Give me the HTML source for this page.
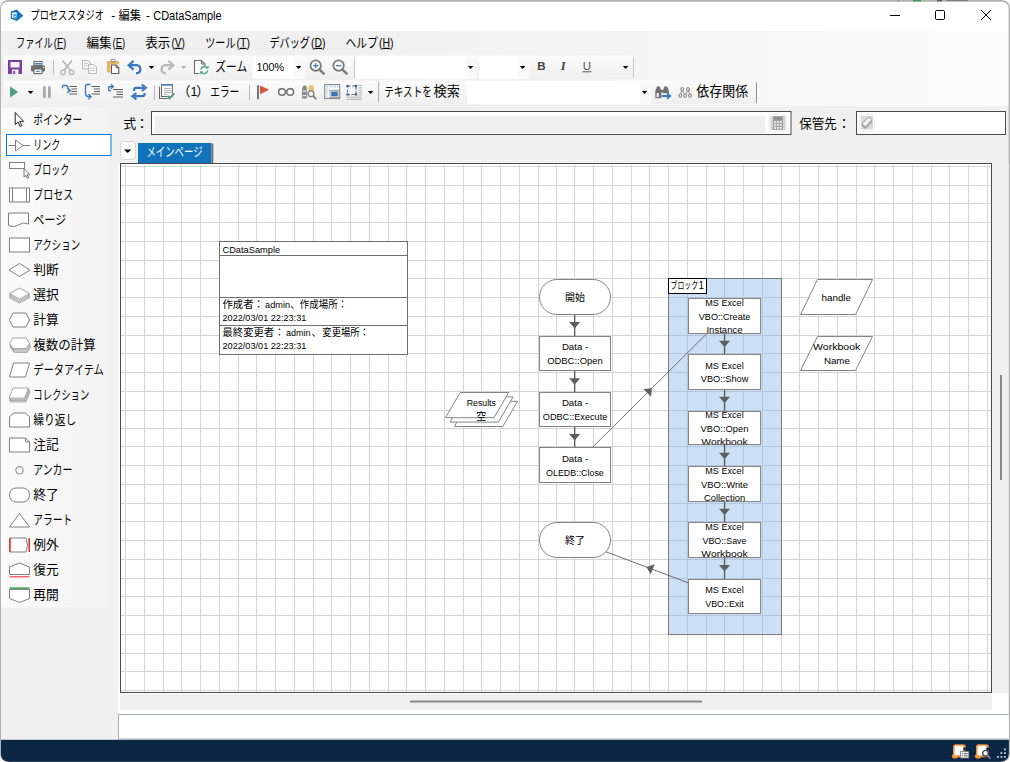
<!DOCTYPE html><html lang="ja"><head><meta charset="utf-8"><title>プロセススタジオ</title><style>html,body{margin:0;padding:0;background:#fff;overflow:hidden}svg{display:block}text{font-family:'Liberation Sans','Noto Sans CJK JP',sans-serif;white-space:pre}</style></head><body>
<svg width="1010" height="762" viewBox="0 0 1010 762">
<defs>
<linearGradient id="gmenu" x1="0" x2="1" y1="0" y2="0"><stop offset="0" stop-color="#f0f0f0"/><stop offset="0.35" stop-color="#f0f0f0"/><stop offset="1" stop-color="#fcfcfc"/></linearGradient>
<linearGradient id="gleft" x1="0" x2="1" y1="0" y2="0"><stop offset="0" stop-color="#fbfbfb"/><stop offset="0.85" stop-color="#f3f3f3"/><stop offset="1" stop-color="#f0f0f0"/></linearGradient>
<linearGradient id="gtool" x1="0" x2="0" y1="0" y2="1"><stop offset="0" stop-color="#fbfbfb"/><stop offset="1" stop-color="#efefef"/></linearGradient>
<clipPath id="win"><path d="M1,9 Q1,1.7 9,1.7 L1001,1.7 Q1008.6,1.7 1008.6,9 L1008.6,753 Q1008.6,761.5 1000,761.5 L9,761.5 Q1,761.5 1,753 Z"/></clipPath>
<clipPath id="canvas"><rect x="121" y="165" width="871" height="527"/></clipPath>
</defs>
<rect x="0" y="0" width="1010" height="762" fill="#ffffff" />
<path d="M0,9 Q0,0 9,0 L1001,0 Q1010,0 1010,9 L1010,753 Q1010,762 1001,762 L9,762 Q0,762 0,753 Z" fill="#b2b2b2" />
<rect x="913" y="0" width="8" height="1.6" fill="#3f9a62" />
<rect x="897.5" y="0" width="1" height="1.6" fill="#777" />
<rect x="937" y="0" width="5" height="1.5" fill="#5a5a5a" />
<rect x="946" y="0" width="22" height="1.1" fill="#7c7c7c" />
<g clip-path="url(#win)">
<rect x="0" y="0" width="1010" height="31" fill="#ffffff" />
<rect x="0" y="31" width="1010" height="75" fill="url(#gmenu)" />
<rect x="0" y="106" width="1010" height="634" fill="#f0f0f0" />
<rect x="0" y="740" width="1010" height="22" fill="#0b2745" />
<path d="M10.8,11.6 L16.8,9.4 L23.3,15.8 L17,21 L10.8,18.8 Z" fill="#1177bb" />
<rect x="12.1" y="12.6" width="4.8" height="5.6" fill="#ffffff" rx="1" />
<text x="13.0" y="17.5" font-size="5.5" fill="#1177bb" font-weight="bold">B</text>
<text x="30.5" y="20.0" font-size="12" fill="#000" textLength="73.4" lengthAdjust="spacingAndGlyphs" >プロセススタジオ</text>
<text x="111.3" y="20.0" font-size="12" fill="#000" >-</text>
<text x="118.5" y="20.0" font-size="12" fill="#000" textLength="22.6" lengthAdjust="spacingAndGlyphs" >編集</text>
<text x="146.0" y="20.0" font-size="12" fill="#000" >-</text>
<text x="153.3" y="20.0" font-size="12" fill="#000" textLength="68.2" lengthAdjust="spacingAndGlyphs" >CDataSample</text>
<line x1="890" y1="15.5" x2="900" y2="15.5" stroke="#000" stroke-width="1" />
<rect x="935.5" y="10.5" width="9" height="9" fill="none" stroke="#000" stroke-width="1" rx="1" />
<path d="M981,10 L991,20 M991,10 L981,20" fill="none" stroke="#000" stroke-width="1" />
<text x="16.0" y="46.8" font-size="13" fill="#000" textLength="36.8" lengthAdjust="spacingAndGlyphs" >ファイル</text>
<text x="53.8" y="46.8" font-size="12.5" textLength="12.4" lengthAdjust="spacingAndGlyphs">(<tspan text-decoration="underline">F</tspan>)</text>
<text x="86.4" y="46.8" font-size="13" fill="#000" textLength="25.2" lengthAdjust="spacingAndGlyphs" >編集</text>
<text x="112.6" y="46.8" font-size="12.5" textLength="12.6" lengthAdjust="spacingAndGlyphs">(<tspan text-decoration="underline">E</tspan>)</text>
<text x="145.3" y="46.8" font-size="13" fill="#000" textLength="25.1" lengthAdjust="spacingAndGlyphs" >表示</text>
<text x="171.4" y="46.8" font-size="12.5" textLength="13.6" lengthAdjust="spacingAndGlyphs">(<tspan text-decoration="underline">V</tspan>)</text>
<text x="205.2" y="46.8" font-size="13" fill="#000" textLength="30.3" lengthAdjust="spacingAndGlyphs" >ツール</text>
<text x="236.5" y="46.8" font-size="12.5" textLength="13.5" lengthAdjust="spacingAndGlyphs">(<tspan text-decoration="underline">T</tspan>)</text>
<text x="269.5" y="46.8" font-size="13" fill="#000" textLength="40.5" lengthAdjust="spacingAndGlyphs" >デバッグ</text>
<text x="311.0" y="46.8" font-size="12.5" textLength="14.5" lengthAdjust="spacingAndGlyphs">(<tspan text-decoration="underline">D</tspan>)</text>
<text x="345.5" y="46.8" font-size="13" fill="#000" textLength="32.5" lengthAdjust="spacingAndGlyphs" >ヘルプ</text>
<text x="379.0" y="46.8" font-size="12.5" textLength="14.5" lengthAdjust="spacingAndGlyphs">(<tspan text-decoration="underline">H</tspan>)</text>
<path d="M4,55.5 L633,55.5 L633,77.5 Q633,79.5 631,79.5 L4,79.5 Z" fill="url(#gtool)" />
<path d="M4,80.5 L378,80.5 L378,102 Q378,104 376,104 L4,104 Z" fill="url(#gtool)" />
<path d="M380,80.5 L756,80.5 L756,102 Q756,104 754,104 L380,104 Z" fill="url(#gtool)" />
<line x1="633.5" y1="57" x2="633.5" y2="78" stroke="#c4c4c4" stroke-width="1" />
<line x1="378.5" y1="82" x2="378.5" y2="102.5" stroke="#b0b0b0" stroke-width="1" />
<line x1="756.5" y1="82.5" x2="756.5" y2="103" stroke="#8c8c8c" stroke-width="1" />
<path d="M8,60 h14 v14 h-14 Z M10.5,62 v5.5 h9 v-5.5 Z M12,69.5 v4.5 h6.5 v-4.5 Z" fill="#7e3fa3" fill-rule="evenodd"/>
<rect x="13.3" y="71" width="1.8" height="3" fill="#7e3fa3" />
<rect x="34" y="61.5" width="8" height="4" fill="#ffffff" stroke="#6e6e6e" stroke-width="1.2" />
<rect x="31" y="65.5" width="14" height="6" fill="#6e6e6e" rx="1" />
<rect x="34" y="69" width="8" height="4.6" fill="#ffffff" stroke="#6e6e6e" stroke-width="1.2" />
<rect x="35" y="63" width="6" height="1.5" fill="#3f7fc0" />
<rect x="36.3" y="70.8" width="3.4" height="1.2" fill="#3f7fc0" />
<rect x="43" y="67" width="1.2" height="1.2" fill="#ffffff" />
<line x1="53.5" y1="60" x2="53.5" y2="75" stroke="#bdbdbd" stroke-width="1" />
<path d="M62.5,60.5 L71,71 M72,60.5 L63.5,71" fill="none" stroke="#b4b4b4" stroke-width="1.6" />
<circle cx="63" cy="72.3" r="2.2" fill="none" stroke="#b4b4b4" stroke-width="1.3"/><circle cx="71.5" cy="72.3" r="2.2" fill="none" stroke="#b4b4b4" stroke-width="1.3"/>
<path d="M82.5,60.5 h5.5 l2.5,2.5 v6 h-8 Z" fill="#f4f4f4" stroke="#b8b8b8" stroke-width="1" />
<path d="M88.5,64.5 h5.5 l2.5,2.5 v6.5 h-8 Z" fill="#f4f4f4" stroke="#b8b8b8" stroke-width="1" />
<path d="M84,63.5 h4 M84,65.5 h3 M90,68.5 h5 M90,70.5 h5" fill="none" stroke="#c4c4c4" stroke-width="0.8" />
<path d="M107,61 h12 v3.5 h-8.5 v8 h-3.5 Z" fill="#e9b65f" />
<rect x="110.8" y="59.3" width="4.6" height="2.6" fill="none" stroke="#8a8a8a" stroke-width="1" rx="1" />
<path d="M111.5,65 h4.5 l2.8,2.8 v5.7 h-7.3 Z" fill="#ffffff" stroke="#5a5a5a" stroke-width="1.1" />
<path d="M116,65 v2.8 h2.8" fill="none" stroke="#5a5a5a" stroke-width="0.9" />
<path d="M130,65.2 H137.5 A4.2,4.2 0 0 1 137.5,73.2 H136" fill="none" stroke="#3b79bf" stroke-width="2.2" />
<path d="M133.6,60.8 L128.6,65.2 L133.6,69.6" fill="none" stroke="#3b79bf" stroke-width="2.2" />
<path d="M148.7,66 h5.6 l-2.8,3 Z" fill="#000" />
<path d="M172,65.2 H164.5 A4.2,4.2 0 0 0 164.5,73.2 H166" fill="none" stroke="#b9b9b9" stroke-width="2.2" />
<path d="M168.4,60.8 L173.4,65.2 L168.4,69.6" fill="none" stroke="#b9b9b9" stroke-width="2.2" />
<path d="M180.8,66 h5.6 l-2.8,3 Z" fill="#b0b0b0" />
<path d="M194.5,60.5 h7 l3.5,3.5 v9.5 h-10.5 Z" fill="#fbfbfb" stroke="#6b6b6b" stroke-width="1.1" />
<path d="M201.5,60.5 v3.5 h3.5" fill="none" stroke="#6b6b6b" stroke-width="1" />
<rect x="199.5" y="66" width="9.5" height="9" fill="#f6f6f6" />
<path d="M201,69.5 a3.6,3.6 0 0 1 6.4,-1.6 M207.6,70.5 a3.6,3.6 0 0 1 -6.4,1.8" fill="none" stroke="#5aa585" stroke-width="1.6" />
<path d="M208.6,65.6 v3.2 h-3.2 Z M200,74.4 v-3.2 h3.2 Z" fill="#5aa585" />
<text x="215.3" y="70.9" font-size="13" fill="#000" textLength="32.0" lengthAdjust="spacingAndGlyphs" >ズーム</text>
<rect x="253" y="56.5" width="51.6" height="22.2" fill="#ffffff" />
<rect x="293" y="57.5" width="11" height="20.2" fill="#f9f9f9" />
<text x="256.6" y="70.5" font-size="11.5" fill="#000" textLength="27.5" lengthAdjust="spacingAndGlyphs" >100%</text>
<path d="M295.8,66 h5.6 l-2.8,3 Z" fill="#000" />
<circle cx="315.7" cy="65.6" r="5.2" fill="#fbfbfb" stroke="#7d7d7d" stroke-width="1.9"/>
<line x1="319.9" y1="69.8" x2="323.7" y2="73.6" stroke="#7d7d7d" stroke-width="2.6" stroke-linecap="round"/>
<line x1="313.09999999999997" y1="65.6" x2="318.3" y2="65.6" stroke="#3b79bf" stroke-width="1.3" />
<line x1="315.7" y1="63" x2="315.7" y2="68.2" stroke="#3b79bf" stroke-width="1.3" />
<circle cx="338.6" cy="65.6" r="5.2" fill="#fbfbfb" stroke="#7d7d7d" stroke-width="1.9"/>
<line x1="342.8" y1="69.8" x2="346.6" y2="73.6" stroke="#7d7d7d" stroke-width="2.6" stroke-linecap="round"/>
<line x1="336.0" y1="65.6" x2="341.20000000000005" y2="65.6" stroke="#3b79bf" stroke-width="1.3" />
<line x1="354.5" y1="57" x2="354.5" y2="78" stroke="#c8c8c8" stroke-width="1" />
<rect x="355.5" y="56.5" width="121.5" height="22.2" fill="#ffffff" />
<rect x="465" y="57.5" width="12" height="20.2" fill="#f9f9f9" />
<path d="M467.8,66 h5.6 l-2.8,3 Z" fill="#000" />
<rect x="479" y="56.5" width="50.2" height="22.2" fill="#ffffff" />
<rect x="517.5" y="57.5" width="11.7" height="20.2" fill="#f9f9f9" />
<path d="M519.8,66 h5.6 l-2.8,3 Z" fill="#000" />
<text x="537.2" y="69.7" font-size="11.5" fill="#444" font-weight="bold">B</text>
<text x="560.8" y="70.3" font-size="12.5" fill="#444" style="font-family:'Liberation Serif',serif;font-weight:bold;font-style:italic">I</text>
<text x="582.8" y="70.0" font-size="11.5" fill="#555" >U</text>
<line x1="582.5" y1="71.8" x2="591.3" y2="71.8" stroke="#555" stroke-width="1" />
<path d="M622.8,66 h5.6 l-2.8,3 Z" fill="#000" />
<path d="M10,86.3 L18.2,92 L10,97.8 Z" fill="#54a082" />
<path d="M27.8,91 h5.6 l-2.8,3 Z" fill="#000" />
<rect x="43" y="86.3" width="2.8" height="11.5" fill="#a9a9a9" />
<rect x="48" y="86.3" width="2.8" height="11.5" fill="#a9a9a9" />
<path d="M62.5,85.5 h3 q2.5,0 2.5,2.5 t2,2.5" fill="none" stroke="#3b79bf" stroke-width="1.3" />
<path d="M62.5,85.2 v3" fill="none" stroke="#3b79bf" stroke-width="1.3" />
<path d="M67.5,88.2 l3,2.4 l-3.2,2" fill="none" stroke="#3b79bf" stroke-width="1.3" />
<path d="M69.5,86.5 h7.5 M71.5,89 h5.5 M71.5,91.5 h5.5 M69.5,94 h7.5" fill="none" stroke="#5e5e5e" stroke-width="1.15" />
<path d="M90.5,84.5 h-3 q-2,0 -2,2 v7 q0,3 3,3 h2" fill="none" stroke="#3b79bf" stroke-width="1.3" />
<path d="M88.2,94 l3,2.6 l-3,2.6" fill="none" stroke="#3b79bf" stroke-width="1.3" />
<path d="M91.5,86.5 h8.5 M94,89 h6 M94,91.5 h6 M91.5,94 h8.5" fill="none" stroke="#5e5e5e" stroke-width="1.15" />
<path d="M113,86.5 h-2.5 q-2,0 -2,2.2 t2.5,2.3" fill="none" stroke="#3b79bf" stroke-width="1.3" />
<path d="M110.8,84.2 l2.6,2.3 l-2.6,2.3" fill="none" stroke="#3b79bf" stroke-width="1.3" />
<path d="M113,89.5 h10 M116.5,92 h6.5 M116.5,94.5 h6.5 M113,97 h10" fill="none" stroke="#5e5e5e" stroke-width="1.15" />
<path d="M134,91 v-1 q0,-2.2 2.2,-2.2 h8" fill="none" stroke="#3b79bf" stroke-width="2.2" />
<path d="M141.8,84.6 L146,87.8 L141.8,91" fill="none" stroke="#3b79bf" stroke-width="2" />
<path d="M144.5,93 v1 q0,2.2 -2.2,2.2 h-8" fill="none" stroke="#3b79bf" stroke-width="2.2" />
<path d="M136.5,93 L132.3,96.2 L136.5,99.4" fill="none" stroke="#3b79bf" stroke-width="2" />
<line x1="154.5" y1="85" x2="154.5" y2="100" stroke="#bdbdbd" stroke-width="1" />
<path d="M159.5,86.5 v12 h10" fill="none" stroke="#666" stroke-width="1.1" />
<rect x="161.5" y="84.5" width="10.8" height="12" fill="#fbfbfb" stroke="#666" stroke-width="1" />
<rect x="161.5" y="84" width="10.8" height="1.6" fill="#3b79bf" />
<path d="M163.5,88.5 h7 M163.5,90.5 h7 M163.5,92.5 h7 M163.5,94.5 h3.5" fill="none" stroke="#b5b5b5" stroke-width="1" shape-rendering="crispEdges"/>
<path d="M167.5,95.8 l2.3,2.4 l4.6,-4.8" fill="none" stroke="#5aa585" stroke-width="2" />
<text y="95.6" font-size="13"><tspan x="177.5">（</tspan><tspan x="190.6" font-size="12.5">1</tspan><tspan x="196.2">）</tspan></text>
<text x="210.3" y="95.5" font-size="13" fill="#000" textLength="29.0" lengthAdjust="spacingAndGlyphs" >エラー</text>
<line x1="249.5" y1="85" x2="249.5" y2="100" stroke="#bdbdbd" stroke-width="1" />
<line x1="258" y1="85.2" x2="258" y2="99.2" stroke="#6a6a6a" stroke-width="1.8" />
<path d="M260,85.5 L269.2,89.8 L260,94.2 Z" fill="#d8583a" />
<ellipse cx="282" cy="92" rx="3.4" ry="3.2" fill="none" stroke="#747474" stroke-width="1.5"/><ellipse cx="290.2" cy="92" rx="3.4" ry="3.2" fill="none" stroke="#747474" stroke-width="1.5"/>
<path d="M285.4,91.5 q0.7,-0.8 1.4,0 M279,90.2 q0.5,-2 2.8,-2 M293.2,90.2 q-0.5,-2 -2.8,-2" fill="none" stroke="#747474" stroke-width="1.1" />
<path d="M302,88.5 l1.5,-3 h2.5 l1,3 v10 h-5 Z" fill="#8a8a8a" />
<path d="M308.5,87 l1,-2 h3 l1.5,3 v4 h-5.5 Z" fill="#ecc27a" />
<rect x="302.8" y="90.5" width="3.4" height="1.2" fill="#f2f2f2" />
<rect x="302.8" y="95" width="3.4" height="1.2" fill="#f2f2f2" />
<circle cx="311" cy="93.8" r="2.9" fill="#f4f4f4" stroke="#7d7d7d" stroke-width="1.3"/>
<line x1="313.2" y1="96" x2="316.3" y2="99.2" stroke="#7d7d7d" stroke-width="1.8" />
<rect x="324.7" y="84.6" width="15" height="14" fill="#fbfbfb" stroke="#7f7f7f" stroke-width="1" />
<path d="M326.5,86.5 h12 M326.5,88.5 v9" fill="none" stroke="#bcd3ec" stroke-width="2" stroke-dasharray="1.6,1"/>
<rect x="330" y="90.3" width="9" height="7.3" fill="#ffffff" stroke="#8c8c8c" stroke-width="0.8" />
<rect x="331.2" y="91.5" width="6.6" height="4.9" fill="#3d75b8" />
<rect x="347.5" y="86" width="8.5" height="8.5" fill="none" stroke="#3b79bf" stroke-width="1.1" stroke-dasharray="3,1.6"/>
<rect x="346.4" y="84.9" width="2.2" height="2.2" fill="#555" />
<rect x="354.9" y="84.9" width="2.2" height="2.2" fill="#555" />
<rect x="346.4" y="93.4" width="2.2" height="2.2" fill="#555" />
<rect x="354.9" y="93.4" width="2.2" height="2.2" fill="#555" />
<path d="M358.5,85.5 h3.5 M358.5,87.8 h3.5 M358.5,90.1 h3.5 M358.5,92.4 h3.5 M358.5,94.7 h3.5" fill="none" stroke="#a8a8a8" stroke-width="0.9" />
<path d="M346.5,97.2 h15.5 M346.5,99.4 h15.5" fill="none" stroke="#a8a8a8" stroke-width="0.9" />
<path d="M367.8,91 h5.6 l-2.8,3 Z" fill="#000" />
<text x="384.3" y="95.6" font-size="13" fill="#000" textLength="47.5" lengthAdjust="spacingAndGlyphs" >テキストを</text>
<text x="433.6" y="95.6" font-size="13.3" fill="#000" textLength="26.3" lengthAdjust="spacingAndGlyphs" >検索</text>
<rect x="467" y="80.8" width="184" height="23" fill="#ffffff" />
<rect x="639.5" y="82" width="11.5" height="20.8" fill="#f9f9f9" />
<path d="M641.8,91 h5.6 l-2.8,3 Z" fill="#000" />
<path d="M655.3,98.2 V91 L657,86.4 H659.6 L661.4,91 V98.2 Z" fill="#6f6f6f" />
<rect x="656.6" y="93" width="2.2" height="4" fill="#f4f4f4" />
<path d="M662.7,93.2 V91 L664.5,86.4 H667.1 L668.9,91 V93.2 Z" fill="#6f6f6f" />
<rect x="661" y="89.8" width="2" height="2.6" fill="#6f6f6f" />
<path d="M661.8,96 H669.5 M667,93.1 L670.3,96 L667,98.9" fill="none" stroke="#3b79bf" stroke-width="1.8" />
<rect x="681.0" y="87.7" width="2.4" height="3.4" fill="#fbfbfb" stroke="#6c6c6c" stroke-width="1" rx="0.8" />
<rect x="686.8" y="87.7" width="2.4" height="3.4" fill="#fbfbfb" stroke="#6c6c6c" stroke-width="1" rx="0.8" />
<rect x="679.0999999999999" y="93.9" width="2.4" height="3.4" fill="#fbfbfb" stroke="#6c6c6c" stroke-width="1" rx="0.8" />
<rect x="683.9" y="93.9" width="2.4" height="3.4" fill="#fbfbfb" stroke="#6c6c6c" stroke-width="1" rx="0.8" />
<rect x="688.6999999999999" y="93.9" width="2.4" height="3.4" fill="#fbfbfb" stroke="#6c6c6c" stroke-width="1" rx="0.8" />
<path d="M681.6,91.2 l-1,2.6 M682.8,91.2 l1.7,2.6 M687.4,91.2 l-1.7,2.6 M688.6,91.2 l1,2.6" fill="none" stroke="#787878" stroke-width="0.8" />
<text x="696.3" y="95.6" font-size="13.2" fill="#000" textLength="52.0" lengthAdjust="spacingAndGlyphs" >依存関係</text>
<rect x="1" y="107.5" width="117" height="500" fill="url(#gleft)" />
<rect x="6.5" y="134.5" width="104.5" height="21" fill="#ffffff" stroke="#0078d7" stroke-width="1" />
<text x="33.3" y="123.8" font-size="13" fill="#000" textLength="49.0" lengthAdjust="spacingAndGlyphs" >ポインター</text>
<text x="33.3" y="148.8" font-size="13" fill="#000" textLength="27.0" lengthAdjust="spacingAndGlyphs" >リンク</text>
<text x="33.3" y="173.8" font-size="13" fill="#000" textLength="36.0" lengthAdjust="spacingAndGlyphs" >ブロック</text>
<text x="33.3" y="198.8" font-size="13" fill="#000" textLength="40.0" lengthAdjust="spacingAndGlyphs" >プロセス</text>
<text x="33.3" y="223.8" font-size="13" fill="#000" textLength="33.0" lengthAdjust="spacingAndGlyphs" >ページ</text>
<text x="33.3" y="248.8" font-size="13" fill="#000" textLength="47.0" lengthAdjust="spacingAndGlyphs" >アクション</text>
<text x="33.3" y="273.8" font-size="13" fill="#000" textLength="25.5" lengthAdjust="spacingAndGlyphs" >判断</text>
<text x="33.3" y="298.8" font-size="13" fill="#000" textLength="25.5" lengthAdjust="spacingAndGlyphs" >選択</text>
<text x="33.3" y="323.8" font-size="13" fill="#000" textLength="25.5" lengthAdjust="spacingAndGlyphs" >計算</text>
<text x="33.3" y="348.8" font-size="13" fill="#000" textLength="62.5" lengthAdjust="spacingAndGlyphs" >複数の計算</text>
<text x="33.3" y="373.8" font-size="13" fill="#000" textLength="70.5" lengthAdjust="spacingAndGlyphs" >データアイテム</text>
<text x="33.3" y="398.8" font-size="13" fill="#000" textLength="56.0" lengthAdjust="spacingAndGlyphs" >コレクション</text>
<text x="33.3" y="423.8" font-size="13" fill="#000" textLength="43.0" lengthAdjust="spacingAndGlyphs" >繰り返し</text>
<text x="33.3" y="448.8" font-size="13" fill="#000" textLength="25.5" lengthAdjust="spacingAndGlyphs" >注記</text>
<text x="33.3" y="473.8" font-size="13" fill="#000" textLength="39.0" lengthAdjust="spacingAndGlyphs" >アンカー</text>
<text x="33.3" y="498.8" font-size="13" fill="#000" textLength="25.5" lengthAdjust="spacingAndGlyphs" >終了</text>
<text x="33.3" y="523.8" font-size="13" fill="#000" textLength="39.0" lengthAdjust="spacingAndGlyphs" >アラート</text>
<text x="33.3" y="548.8" font-size="13" fill="#000" textLength="25.5" lengthAdjust="spacingAndGlyphs" >例外</text>
<text x="33.3" y="573.8" font-size="13" fill="#000" textLength="25.5" lengthAdjust="spacingAndGlyphs" >復元</text>
<text x="33.3" y="598.8" font-size="13" fill="#000" textLength="25.5" lengthAdjust="spacingAndGlyphs" >再開</text>
<path d="M15.2,112.5 v12.2 l2.9,-2.6 l2,4.4 l1.7,-0.8 l-2,-4.3 h3.8 Z" fill="#ffffff" stroke="#222" stroke-width="1" />
<path d="M8.5,145.5 h7 M23,145.5 h7" fill="none" stroke="#7f7f7f" stroke-width="1" />
<path d="M15.5,140.0 L23,145.5 L15.5,151.0 Z" fill="#ffffff" stroke="#7f7f7f" stroke-width="1" />
<rect x="9.5" y="162.5" width="15" height="6" fill="#ffffff" stroke="#7f7f7f" stroke-width="1" />
<path d="M24,168.5 v8.6 l2,-1.8 l1.5,3.2 l1.2,-0.6 l-1.5,-3.1 h2.7 Z" fill="#ffffff" stroke="#555" stroke-width="0.8" />
<rect x="9.5" y="188.0" width="20" height="14" fill="#ffffff" stroke="#7f7f7f" stroke-width="1" />
<path d="M12.5,188.0 v14 M26.5,188.0 v14" fill="none" stroke="#7f7f7f" stroke-width="1" />
<path d="M8.5,213.0 h20 v11 q-5,-2.5 -10,0.8 t-10,0.8 Z" fill="#ffffff" stroke="#7f7f7f" stroke-width="1" />
<rect x="9.5" y="238.0" width="20" height="14" fill="#ffffff" stroke="#7f7f7f" stroke-width="1" />
<path d="M9,270.0 L19.5,263.5 L30,270.0 L19.5,276.5 Z" fill="#ffffff" stroke="#7f7f7f" stroke-width="1" />
<path d="M9.5,297.7 L19.5,292.2 L29.5,297.7 L19.5,303.2 Z" fill="#ffffff" stroke="#7f7f7f" stroke-width="0.7" />
<path d="M9.5,296.3 L19.5,290.8 L29.5,296.3 L19.5,301.8 Z" fill="#ffffff" stroke="#7f7f7f" stroke-width="0.7" />
<path d="M9.5,294.9 L19.5,289.4 L29.5,294.9 L19.5,300.4 Z" fill="#ffffff" stroke="#7f7f7f" stroke-width="0.7" />
<path d="M9.5,293.5 L19.5,288.0 L29.5,293.5 L19.5,299.0 Z" fill="#ffffff" stroke="#7f7f7f" stroke-width="0.7" />
<path d="M9.5,320.0 L13,313.0 H26 L29.5,320.0 L26,327.0 H13 Z" fill="#ffffff" stroke="#7f7f7f" stroke-width="1" />
<path d="M10.7,347.4 L14.2,341.9 H27.2 L30.7,347.4 L27.2,352.4 H14.2 Z" fill="#ffffff" stroke="#7f7f7f" stroke-width="0.7" />
<path d="M10.3,346.1 L13.8,340.6 H26.8 L30.3,346.1 L26.8,351.1 H13.8 Z" fill="#ffffff" stroke="#7f7f7f" stroke-width="0.7" />
<path d="M9.9,344.8 L13.4,339.3 H26.4 L29.9,344.8 L26.4,349.8 H13.4 Z" fill="#ffffff" stroke="#7f7f7f" stroke-width="0.7" />
<path d="M9.5,343.5 L13.0,338.0 H26.0 L29.5,343.5 L26.0,348.5 H13.0 Z" fill="#ffffff" stroke="#7f7f7f" stroke-width="0.7" />
<path d="M13.5,363.0 H29.5 L25.5,377.0 H9.5 Z" fill="#ffffff" stroke="#7f7f7f" stroke-width="1" />
<path d="M14.5,391.9 H30.0 L26.0,401.9 H10.5 Z" fill="#ffffff" stroke="#7f7f7f" stroke-width="0.7" />
<path d="M14.0,390.6 H29.5 L25.5,400.6 H10.0 Z" fill="#ffffff" stroke="#7f7f7f" stroke-width="0.7" />
<path d="M13.5,389.3 H29.0 L25.0,399.3 H9.5 Z" fill="#ffffff" stroke="#7f7f7f" stroke-width="0.7" />
<path d="M13.0,388.0 H28.5 L24.5,398.0 H9.0 Z" fill="#ffffff" stroke="#7f7f7f" stroke-width="0.7" />
<path d="M9.5,427.0 V417.0 L13.5,413.0 H25.5 L29.5,417.0 V427.0 Z" fill="#ffffff" stroke="#7f7f7f" stroke-width="1" />
<path d="M9.5,438.0 H25.5 L29.5,442.0 V452.0 H9.5 Z" fill="#ffffff" stroke="#7f7f7f" stroke-width="1" />
<path d="M25.5,438.0 V442.0 H29.5" fill="none" stroke="#7f7f7f" stroke-width="1" />
<circle cx="19.5" cy="470.3" r="3.8" fill="#ffffff" stroke="#7f7f7f" stroke-width="1"/>
<rect x="9.5" y="488.0" width="20" height="14" fill="#ffffff" stroke="#7f7f7f" stroke-width="1" rx="6.5" />
<path d="M9.5,527.0 L19.5,513.5 L29.5,527.0 Z" fill="#ffffff" stroke="#7f7f7f" stroke-width="1" />
<path d="M9.5,538.0 H26 L27.5,545.0 L26,552.0 H9.5 Z" fill="#ffffff" stroke="#7f7f7f" stroke-width="1" />
<line x1="10" y1="538.0" x2="10" y2="552.0" stroke="#e53935" stroke-width="1.6" />
<line x1="29.2" y1="538.0" x2="29.2" y2="552.0" stroke="#e53935" stroke-width="1.6" />
<path d="M9.5,574.5 V567.0 L19.5,563.0 L29.5,567.0 V574.5 Z" fill="#ffffff" stroke="#7f7f7f" stroke-width="1" />
<line x1="9.5" y1="576.8" x2="29.5" y2="576.8" stroke="#ef6b6b" stroke-width="1.5" />
<path d="M9.5,589.5 V598.5 L19.5,602.5 L29.5,598.5 V589.5 Z" fill="#ffffff" stroke="#7f7f7f" stroke-width="1" />
<line x1="9.5" y1="588.2" x2="29.5" y2="588.2" stroke="#58a86a" stroke-width="2" />
<text x="123.3" y="127.7" font-size="13" fill="#000" >式</text>
<text x="135.5" y="127.7" font-size="13" fill="#000" >：</text>
<rect x="151.5" y="111.5" width="639.5" height="23" fill="#ffffff" stroke="#4a4a4a" stroke-width="1" />
<rect x="155" y="116" width="610" height="17" fill="#f0f0f0" />
<rect x="769" y="114.5" width="18" height="17" fill="#ffffff" stroke="#ececec" stroke-width="1" rx="3" />
<rect x="770.5" y="116" width="15" height="14" fill="#d2d2d2" />
<rect x="773" y="116" width="10" height="14" fill="#a3a3a3" />
<rect x="774.2" y="117.3" width="7.6" height="2.4" fill="#8e8e8e" />
<rect x="774.3" y="121.2" width="1.8" height="1.8" fill="#f2f2f2" />
<rect x="777.0999999999999" y="121.2" width="1.8" height="1.8" fill="#f2f2f2" />
<rect x="779.9" y="121.2" width="1.8" height="1.8" fill="#f2f2f2" />
<rect x="774.3" y="124.10000000000001" width="1.8" height="1.8" fill="#f2f2f2" />
<rect x="777.0999999999999" y="124.10000000000001" width="1.8" height="1.8" fill="#f2f2f2" />
<rect x="779.9" y="124.10000000000001" width="1.8" height="1.8" fill="#f2f2f2" />
<rect x="774.3" y="127.0" width="1.8" height="1.8" fill="#f2f2f2" />
<rect x="777.0999999999999" y="127.0" width="1.8" height="1.8" fill="#f2f2f2" />
<rect x="779.9" y="127.0" width="1.8" height="1.8" fill="#f2f2f2" />
<text x="799.2" y="127.7" font-size="13" fill="#000" textLength="37.5" lengthAdjust="spacingAndGlyphs" >保管先</text>
<text x="837.5" y="127.7" font-size="13" fill="#000" >：</text>
<rect x="856.5" y="111.5" width="149" height="23" fill="#ffffff" stroke="#4a4a4a" stroke-width="1" />
<rect x="859.5" y="114.5" width="15" height="17" fill="#ffffff" stroke="#ececec" stroke-width="1" rx="3" />
<rect x="861" y="116" width="12" height="13.5" fill="#d9d9d9" />
<path d="M862,124 L868.5,117 L872,119.5 L865.5,127 Z" fill="#f3f3f3" stroke="#a0a0a0" stroke-width="1" />
<path d="M862,124 L865.5,127 V129 L862,126.5 Z" fill="#a0a0a0" />
<path d="M865.5,127 L872,119.5 V122.5 L865.5,129.3 Z" fill="#a8a8a8" />
<rect x="120.5" y="141.5" width="14.7" height="18" fill="#ffffff" stroke="#d4d4d4" stroke-width="1" rx="3" />
<path d="M124,149.5 h7.4 l-3.7,3.6 Z" fill="#000" />
<rect x="138" y="143" width="73.5" height="20.5" fill="#1073bb" />
<rect x="211.5" y="143.5" width="1.8" height="20" fill="#6f6f6f" />
<text x="146.5" y="155.7" font-size="13" fill="#ffffff" textLength="56.0" lengthAdjust="spacingAndGlyphs" >メインページ</text>
<rect x="118" y="164" width="3" height="529" fill="#fafafa" />
<rect x="120" y="163" width="872" height="530" fill="#4a4a4a" />
<rect x="121" y="164" width="870" height="528" fill="#ffffff" />
<g clip-path="url(#canvas)" shape-rendering="crispEdges">
<path d="M125.5,164 V692 M144.5,164 V692 M163.5,164 V692 M181.5,164 V692 M200.5,164 V692 M219.5,164 V692 M238.5,164 V692 M256.5,164 V692 M275.5,164 V692 M294.5,164 V692 M313.5,164 V692 M331.5,164 V692 M350.5,164 V692 M369.5,164 V692 M388.5,164 V692 M406.5,164 V692 M425.5,164 V692 M444.5,164 V692 M463.5,164 V692 M481.5,164 V692 M500.5,164 V692 M519.5,164 V692 M538.5,164 V692 M556.5,164 V692 M574.5,164 V692 M593.5,164 V692 M612.5,164 V692 M631.5,164 V692 M649.5,164 V692 M668.5,164 V692 M687.5,164 V692 M706.5,164 V692 M724.5,164 V692 M743.5,164 V692 M762.5,164 V692 M781.5,164 V692 M799.5,164 V692 M818.5,164 V692 M837.5,164 V692 M856.5,164 V692 M874.5,164 V692 M893.5,164 V692 M912.5,164 V692 M931.5,164 V692 M949.5,164 V692 M968.5,164 V692 M987.5,164 V692 M121,166.5 H991 M121,185.5 H991 M121,203.5 H991 M121,222.5 H991 M121,241.5 H991 M121,260.5 H991 M121,278.5 H991 M121,297.5 H991 M121,316.5 H991 M121,335.5 H991 M121,353.5 H991 M121,372.5 H991 M121,391.5 H991 M121,410.5 H991 M121,428.5 H991 M121,446.5 H991 M121,465.5 H991 M121,484.5 H991 M121,503.5 H991 M121,521.5 H991 M121,540.5 H991 M121,559.5 H991 M121,578.5 H991 M121,596.5 H991 M121,615.5 H991 M121,634.5 H991 M121,653.5 H991 M121,671.5 H991 M121,690.5 H991" fill="none" stroke="#d4d4d4" stroke-width="1" />
</g>
<g clip-path="url(#canvas)">
<rect x="668.5" y="278.5" width="113" height="356" fill="#7fb2e5" fill-opacity="0.4"/>
<rect x="668.5" y="278.5" width="113" height="356" fill="none" stroke="#7a7a7a" stroke-width="1" />
<rect x="668.5" y="278.5" width="38" height="15" fill="#ffffff" stroke="#000" stroke-width="1" />
<text x="670.6" y="289.3" font-size="10" fill="#000" textLength="27.5" lengthAdjust="spacingAndGlyphs" >ブロック</text>
<text x="698.6" y="289.3" font-size="10" fill="#000" >1</text>
<rect x="219.5" y="241.5" width="188" height="113" fill="#ffffff" stroke="#6f6f6f" stroke-width="1" />
<path d="M219.5,255.5 h188 M219.5,297.5 h188 M219.5,325.5 h188" fill="none" stroke="#6f6f6f" stroke-width="1" />
<text x="222.5" y="253.3" font-size="9.7" fill="#000" textLength="57.6" lengthAdjust="spacingAndGlyphs" >CDataSample</text>
<text x="222.5" y="308.2" font-size="10" fill="#000" textLength="41.5" lengthAdjust="spacingAndGlyphs" >作成者：</text>
<text x="265.1" y="308.2" font-size="9.7" fill="#000" textLength="25.0" lengthAdjust="spacingAndGlyphs" >admin</text>
<text x="290.3" y="308.2" font-size="10" fill="#000" >、</text>
<text x="299.8" y="308.2" font-size="10" fill="#000" textLength="47.4" lengthAdjust="spacingAndGlyphs" >作成場所：</text>
<text x="222.5" y="320.9" font-size="9.7" fill="#000" textLength="83.8" lengthAdjust="spacingAndGlyphs" >2022/03/01 22:23:31</text>
<text x="222.5" y="336.2" font-size="10" fill="#000" textLength="62.0" lengthAdjust="spacingAndGlyphs" >最終変更者：</text>
<text x="285.9" y="336.2" font-size="9.7" fill="#000" textLength="24.5" lengthAdjust="spacingAndGlyphs" >admin</text>
<text x="311.5" y="336.2" font-size="10" fill="#000" >、</text>
<text x="322.3" y="336.2" font-size="10" fill="#000" textLength="46.7" lengthAdjust="spacingAndGlyphs" >変更場所：</text>
<text x="222.5" y="348.7" font-size="9.7" fill="#000" textLength="83.8" lengthAdjust="spacingAndGlyphs" >2022/03/01 22:23:31</text>
<line x1="574.65" y1="297" x2="574.65" y2="353.5" stroke="#5f5f5f" stroke-width="1.4" />
<path d="M574.65,328.55 L569.15,321.95 L580.15,321.95 Z" fill="#5f5f5f" />
<line x1="574.65" y1="353.5" x2="574.65" y2="409.5" stroke="#5f5f5f" stroke-width="1.4" />
<path d="M574.65,384.80 L569.15,378.20 L580.15,378.20 Z" fill="#5f5f5f" />
<line x1="574.65" y1="409.5" x2="574.65" y2="465" stroke="#5f5f5f" stroke-width="1.4" />
<path d="M574.65,440.55 L569.15,433.95 L580.15,433.95 Z" fill="#5f5f5f" />
<line x1="724.55" y1="316" x2="724.55" y2="372" stroke="#5f5f5f" stroke-width="1.4" />
<path d="M724.55,347.30 L719.05,340.70 L730.05,340.70 Z" fill="#5f5f5f" />
<line x1="724.55" y1="372" x2="724.55" y2="428" stroke="#5f5f5f" stroke-width="1.4" />
<path d="M724.55,403.30 L719.05,396.70 L730.05,396.70 Z" fill="#5f5f5f" />
<line x1="724.55" y1="428" x2="724.55" y2="484" stroke="#5f5f5f" stroke-width="1.4" />
<path d="M724.55,459.30 L719.05,452.70 L730.05,452.70 Z" fill="#5f5f5f" />
<line x1="724.55" y1="484" x2="724.55" y2="540" stroke="#5f5f5f" stroke-width="1.4" />
<path d="M724.55,515.30 L719.05,508.70 L730.05,508.70 Z" fill="#5f5f5f" />
<line x1="724.55" y1="540" x2="724.55" y2="596.5" stroke="#5f5f5f" stroke-width="1.4" />
<path d="M724.55,571.55 L719.05,564.95 L730.05,564.95 Z" fill="#5f5f5f" />
<line x1="574.65" y1="465" x2="724.55" y2="316" stroke="#5f5f5f" stroke-width="0.9" />
<path d="M651.94,388.17 L651.14,396.73 L643.38,388.93 Z" fill="#5f5f5f" />
<line x1="724.55" y1="596.5" x2="574.65" y2="540" stroke="#5f5f5f" stroke-width="0.9" />
<path d="M646.51,567.09 L654.63,564.27 L650.75,574.56 Z" fill="#5f5f5f" />
<rect x="539.5" y="279.5" width="71" height="35" fill="#ffffff" stroke="#858585" stroke-width="1" rx="17.5" />
<text x="565.0" y="301.1" font-size="10" fill="#000" textLength="20.0" lengthAdjust="spacingAndGlyphs" >開始</text>
<rect x="539.5" y="336.5" width="71" height="34" fill="#ffffff" stroke="#858585" stroke-width="1" />
<svg x="539" y="336.4" width="72" height="34.2" viewBox="539 336.4 72 34.2">
<text x="561.9" y="350.0" font-size="9.7" fill="#000" textLength="26.3" lengthAdjust="spacingAndGlyphs" >Data -</text>
<text x="547.2" y="364.0" font-size="9.7" fill="#000" textLength="55.5" lengthAdjust="spacingAndGlyphs" >ODBC::Open</text>
</svg>
<rect x="539.5" y="392.5" width="71" height="34" fill="#ffffff" stroke="#858585" stroke-width="1" />
<svg x="539" y="392.4" width="72" height="34.2" viewBox="539 392.4 72 34.2">
<text x="561.9" y="406.0" font-size="9.7" fill="#000" textLength="26.3" lengthAdjust="spacingAndGlyphs" >Data -</text>
<text x="542.8" y="420.0" font-size="9.7" fill="#000" textLength="64.5" lengthAdjust="spacingAndGlyphs" >ODBC::Execute</text>
</svg>
<rect x="539.5" y="447.5" width="71" height="35" fill="#ffffff" stroke="#858585" stroke-width="1" />
<svg x="539" y="447.4" width="72" height="35.2" viewBox="539 447.4 72 35.2">
<text x="561.9" y="461.5" font-size="9.7" fill="#000" textLength="26.3" lengthAdjust="spacingAndGlyphs" >Data -</text>
<text x="546.1" y="475.5" font-size="9.7" fill="#000" textLength="57.7" lengthAdjust="spacingAndGlyphs" >OLEDB::Close</text>
</svg>
<rect x="539.5" y="522.5" width="71" height="35" fill="#ffffff" stroke="#858585" stroke-width="1" rx="17.5" />
<text x="565.0" y="544.1" font-size="10" fill="#000" textLength="20.0" lengthAdjust="spacingAndGlyphs" >終了</text>
<rect x="688.5" y="298.5" width="72" height="35" fill="#ffffff" stroke="#858585" stroke-width="1" />
<svg x="688" y="298.4" width="73" height="35.2" viewBox="688 298.4 73 35.2">
<text x="705.3" y="305.6" font-size="9.7" fill="#000" textLength="38.4" lengthAdjust="spacingAndGlyphs" >MS Excel</text>
<text x="698.8" y="319.5" font-size="9.7" fill="#000" textLength="51.5" lengthAdjust="spacingAndGlyphs" >VBO::Create</text>
<text x="706.4" y="332.6" font-size="9.7" fill="#000" textLength="36.2" lengthAdjust="spacingAndGlyphs" >Instance</text>
</svg>
<rect x="688.5" y="354.5" width="72" height="35" fill="#ffffff" stroke="#858585" stroke-width="1" />
<svg x="688" y="354.4" width="73" height="35.2" viewBox="688 354.4 73 35.2">
<text x="705.3" y="369.0" font-size="9.7" fill="#000" textLength="38.4" lengthAdjust="spacingAndGlyphs" >MS Excel</text>
<text x="700.8" y="381.8" font-size="9.7" fill="#000" textLength="47.5" lengthAdjust="spacingAndGlyphs" >VBO::Show</text>
</svg>
<rect x="688.5" y="411.5" width="72" height="33" fill="#ffffff" stroke="#858585" stroke-width="1" />
<svg x="688" y="411.4" width="73" height="33.2" viewBox="688 411.4 73 33.2">
<text x="705.3" y="417.6" font-size="9.7" fill="#000" textLength="38.4" lengthAdjust="spacingAndGlyphs" >MS Excel</text>
<text x="700.6" y="431.5" font-size="9.7" fill="#000" textLength="47.8" lengthAdjust="spacingAndGlyphs" >VBO::Open</text>
<text x="701.3" y="444.6" font-size="9.7" fill="#000" textLength="46.4" lengthAdjust="spacingAndGlyphs" >Workbook</text>
</svg>
<rect x="688.5" y="466.5" width="72" height="35" fill="#ffffff" stroke="#858585" stroke-width="1" />
<svg x="688" y="466.4" width="73" height="35.2" viewBox="688 466.4 73 35.2">
<text x="705.3" y="473.6" font-size="9.7" fill="#000" textLength="38.4" lengthAdjust="spacingAndGlyphs" >MS Excel</text>
<text x="701.0" y="487.5" font-size="9.7" fill="#000" textLength="47.0" lengthAdjust="spacingAndGlyphs" >VBO::Write</text>
<text x="703.9" y="500.6" font-size="9.7" fill="#000" textLength="41.3" lengthAdjust="spacingAndGlyphs" >Collection</text>
</svg>
<rect x="688.5" y="522.5" width="72" height="35" fill="#ffffff" stroke="#858585" stroke-width="1" />
<svg x="688" y="522.4" width="73" height="35.2" viewBox="688 522.4 73 35.2">
<text x="705.3" y="529.6" font-size="9.7" fill="#000" textLength="38.4" lengthAdjust="spacingAndGlyphs" >MS Excel</text>
<text x="702.5" y="543.5" font-size="9.7" fill="#000" textLength="44.0" lengthAdjust="spacingAndGlyphs" >VBO::Save</text>
<text x="701.3" y="556.6" font-size="9.7" fill="#000" textLength="46.4" lengthAdjust="spacingAndGlyphs" >Workbook</text>
</svg>
<rect x="688.5" y="579.5" width="72" height="34" fill="#ffffff" stroke="#858585" stroke-width="1" />
<svg x="688" y="579.4" width="73" height="34.2" viewBox="688 579.4 73 34.2">
<text x="705.3" y="593.0" font-size="9.7" fill="#000" textLength="38.4" lengthAdjust="spacingAndGlyphs" >MS Excel</text>
<text x="705.3" y="607.0" font-size="9.7" fill="#000" textLength="38.4" lengthAdjust="spacingAndGlyphs" >VBO::Exit</text>
</svg>
<path d="M817.5,279.5 H872.5 L855.5,314.5 H800.5 Z" fill="#ffffff" stroke="#858585" stroke-width="1" />
<text x="821.5" y="300.7" font-size="9.7" fill="#000" textLength="29.5" lengthAdjust="spacingAndGlyphs" >handle</text>
<path d="M817.5,336.5 H872.5 L855.5,370.5 H800.5 Z" fill="#ffffff" stroke="#858585" stroke-width="1" />
<text x="813.0" y="349.8" font-size="9.7" fill="#000" textLength="47.3" lengthAdjust="spacingAndGlyphs" >Workbook</text>
<text x="823.9" y="363.8" font-size="9.7" fill="#000" textLength="26.0" lengthAdjust="spacingAndGlyphs" >Name</text>
<path d="M469.0,401.3 H517.5 L502.8,426.5 H454.3 Z" fill="#ffffff" stroke="#858585" stroke-width="1" />
<path d="M464.59999999999997,396.9 H513.1 L498.40000000000003,422.09999999999997 H449.9 Z" fill="#ffffff" stroke="#858585" stroke-width="1" />
<path d="M460.2,392.5 H508.7 L494.0,417.7 H445.5 Z" fill="#ffffff" stroke="#858585" stroke-width="1" />
<text x="466.7" y="405.5" font-size="9.7" fill="#000" textLength="29.2" lengthAdjust="spacingAndGlyphs" >Results</text>
<text x="476.2" y="420.3" font-size="10" fill="#000" >空</text>
</g>
<rect x="992" y="164" width="17" height="529" fill="#f0f0f0" />
<rect x="1000" y="375" width="2" height="105" fill="#8a8a8a" />
<rect x="118" y="693" width="891" height="47" fill="#ffffff" />
<rect x="120" y="694" width="872" height="16" fill="#f0f0f0" />
<rect x="410" y="700.5" width="292" height="2" fill="#8a8a8a" />
<rect x="118.5" y="714.5" width="895" height="24.5" fill="#ffffff" stroke="#a9adb6" stroke-width="1" />
<rect x="0" y="739.8" width="1010" height="23" fill="#0b2745" />
<rect x="953.0" y="744.2" width="12.8" height="13" fill="#f0923a" rx="2.5" />
<rect x="951.8" y="754.3" width="6.5" height="4.1" fill="#f0923a" rx="1.8" />
<rect x="954.6" y="745.8" width="8.8" height="9.5" fill="#ffffff" rx="1" />
<rect x="963.4" y="747.6" width="2.6" height="3" fill="#0b2745" />
<rect x="954.6" y="754.2" width="3" height="1.1" fill="#ffffff" />
<rect x="960.5" y="751.5" width="8.3" height="6.5" fill="#f2f2f2" stroke="#7a7a7a" stroke-width="0.8" />
<path d="M962,753.6 h1.2 M964.2,753.6 h3.4 M962,755.8 h1.2 M964.2,755.8 h3.4" fill="none" stroke="#555" stroke-width="1" />
<rect x="976.0" y="744.2" width="12.8" height="13" fill="#f0923a" rx="2.5" />
<rect x="974.8" y="754.3" width="6.5" height="4.1" fill="#f0923a" rx="1.8" />
<rect x="977.6" y="745.8" width="8.8" height="9.5" fill="#ffffff" rx="1" />
<rect x="986.4" y="747.6" width="2.6" height="3" fill="#0b2745" />
<rect x="977.6" y="754.2" width="3" height="1.1" fill="#ffffff" />
<circle cx="985.5" cy="753.3" r="2.8" fill="#f4f4f4" stroke="#2a3b55" stroke-width="1.2"/>
<line x1="987.6" y1="755.5" x2="990.6" y2="758.6" stroke="#9a9a9a" stroke-width="1.5" />
<rect x="1004" y="748.5" width="1.8" height="1.8" fill="#c8cdd6" />
<rect x="1000.5" y="752.2" width="1.8" height="1.8" fill="#c8cdd6" />
<rect x="1004" y="752.2" width="1.8" height="1.8" fill="#c8cdd6" />
<rect x="997" y="756" width="1.8" height="1.8" fill="#c8cdd6" />
<rect x="1000.5" y="756" width="1.8" height="1.8" fill="#c8cdd6" />
<rect x="1004" y="756" width="1.8" height="1.8" fill="#c8cdd6" />
</g>
</svg></body></html>
